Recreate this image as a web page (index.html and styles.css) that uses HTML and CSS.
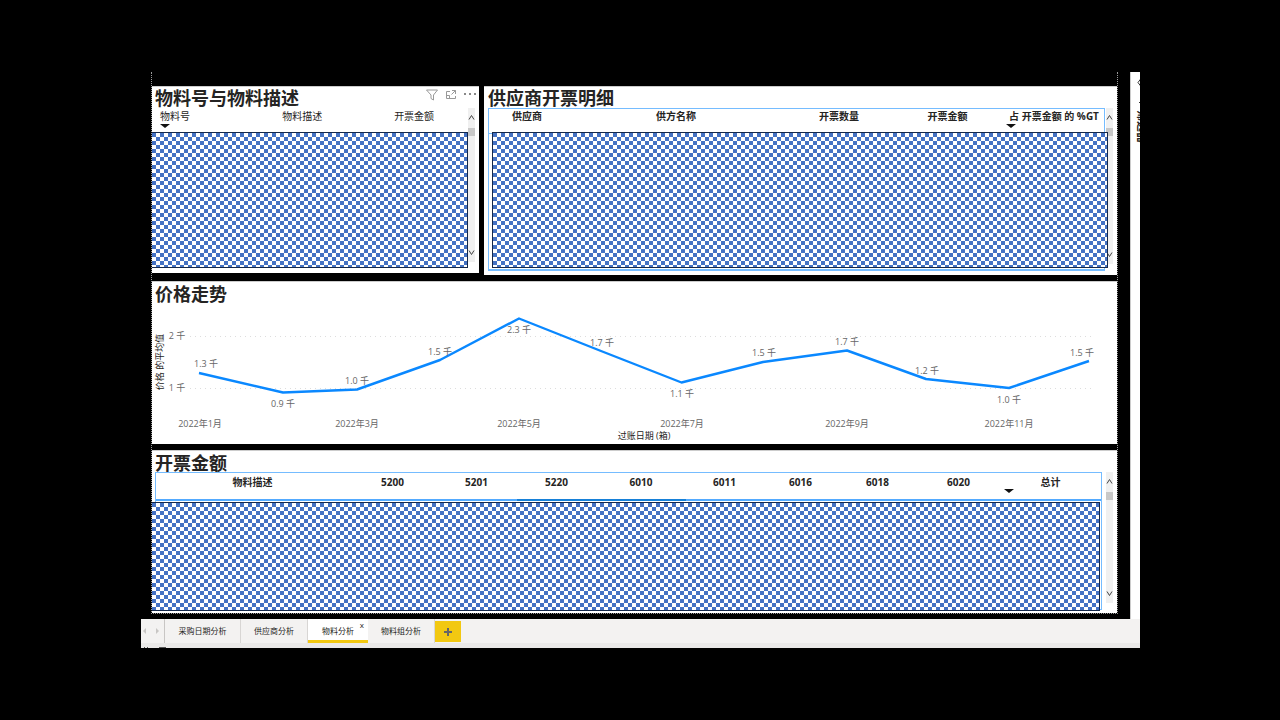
FILE: index.html
```html
<!DOCTYPE html>
<html lang="zh-CN">
<head>
<meta charset="utf-8">
<title>物料分析</title>
<link rel="stylesheet" href="styles.css">
</head>
<body>
<div class="app">
  <div class="workspace">
    <main class="canvas">
      <div class="row">
        <section class="panel panel-materials">
          <header class="panel-head">
            <h2>物料号与物料描述</h2>
            <div class="tools">
              <button type="button" aria-label="筛选器"><svg width="12" height="12" viewBox="0 0 12 12"><path d="M.5 1h11L7.500 6v5L5 9.500V6z"/></svg></button>
              <button type="button" aria-label="焦点模式"><svg width="12" height="12" viewBox="0 0 12 12"><path d="M5 2.500H1.500v7h9V7M1.500 6.500h3v3M7 1.500h3.500V5M10.500 1.500L6.500 5.500"/></svg></button>
              <button type="button" aria-label="更多选项"><svg class="dots" width="12" height="12" viewBox="0 0 12 12"><path d="M0 4h2v2H0zM5 4h2v2H5zM10 4h2v2h-2z"/></svg></button>
            </div>
          </header>
          <div class="table-area">
            <table class="plain">
              <colgroup><col class="a1"><col class="a2"><col class="a3"></colgroup>
              <thead><tr><th class="left">物料号<span class="sort"></span></th><th>物料描述</th><th>开票金额</th></tr></thead>
            </table>
            <div class="scroll"><svg viewBox="0 0 7 7"><path d="M1 5.500l2.500-4 2.500 4"/></svg><i></i><svg viewBox="0 0 7 7"><path d="M1 1.500l2.500 4 2.500-4"/></svg></div>
          </div>
          <svg class="mask mask-materials">
            <defs><pattern id="check" width="8" height="8" patternUnits="userSpaceOnUse"><path d="M0 0h4v4H0zM4 4h4v4H4z" fill="#4472c4" shape-rendering="crispEdges"/></pattern></defs>
            <rect width="100%" height="100%" fill="url(#check)"/>
          </svg>
        </section>
        <section class="panel panel-suppliers">
          <header class="panel-head"><h2>供应商开票明细</h2></header>
          <div class="table-area">
            <div class="outlined">
              <table>
                <colgroup><col class="b1"><col class="b2"><col class="b3"><col class="b4"><col class="b5"></colgroup>
                <thead><tr><th>供应商</th><th>供方名称</th><th>开票数量</th><th>开票金额</th><th>占 开票金额 的 %GT<span class="sort"></span></th></tr></thead>
              </table>
            </div>
            <div class="scroll"><svg viewBox="0 0 7 7"><path d="M1 5.500l2.500-4 2.500 4"/></svg><i></i><svg viewBox="0 0 7 7"><path d="M1 1.500l2.500 4 2.500-4"/></svg></div>
          </div>
          <svg class="mask mask-suppliers"><rect width="100%" height="100%" fill="url(#check)"/></svg>
        </section>
      </div>

      <section class="panel panel-chart">
        <header class="panel-head"><h2>价格走势</h2></header>
        <svg class="chart" viewBox="0 0 965 137" role="img" aria-label="价格走势">
          <g class="grid"><path d="M38 30.500H942"/><path d="M38 82.500H942"/></g>
          <polyline class="line" points="47,67 131,86.500 205,83.500 288,54 367,12.500 449,45 529.500,76.500 611,56 695,44.500 774,73 857,82 937,55"/>
          <g class="label">
            <text x="25" y="33">2 千</text><text x="25" y="85">1 千</text>
            <text x="54" y="61">1.3 千</text><text x="131" y="101">0.9 千</text><text x="205" y="78">1.0 千</text><text x="288" y="49">1.5 千</text>
            <text x="367" y="27">2.3 千</text><text x="450" y="40">1.7 千</text><text x="530" y="91">1.1 千</text><text x="612" y="50">1.5 千</text>
            <text x="695" y="39">1.7 千</text><text x="775" y="68">1.2 千</text><text x="857" y="97">1.0 千</text><text x="930" y="50">1.5 千</text>
            <text x="48" y="121">2022年1月</text><text x="205" y="121">2022年3月</text><text x="367" y="121">2022年5月</text>
            <text x="530" y="121">2022年7月</text><text x="695" y="121">2022年9月</text><text x="857" y="121">2022年11月</text>
          </g>
          <g class="axis-title"><text x="492" y="133">过账日期 (箱)</text><text transform="translate(11 56) rotate(-90)">价格 的平均值</text></g>
        </svg>
      </section>

      <section class="panel panel-matrix">
        <header class="panel-head"><h2>开票金额</h2></header>
        <div class="table-area">
          <div class="outlined">
            <table>
              <colgroup><col class="c1"><col class="c2"><col class="c3"><col class="c4"><col class="c5"><col class="c6"><col class="c7"><col class="c8"><col class="c9"><col class="c10"></colgroup>
              <thead><tr><th>物料描述</th><th>5200</th><th>5201</th><th class="picked">5220</th><th class="picked">6010</th><th>6011</th><th>6016</th><th>6018</th><th>6020</th><th>总计<span class="sort"></span></th></tr></thead>
            </table>
          </div>
          <div class="scroll"><svg viewBox="0 0 7 7"><path d="M1 5.500l2.500-4 2.500 4"/></svg><i></i><svg viewBox="0 0 7 7"><path d="M1 1.500l2.500 4 2.500-4"/></svg></div>
        </div>
        <svg class="mask mask-matrix"><rect width="100%" height="100%" fill="url(#check)"/></svg>
      </section>
    </main>
    <aside class="side">
      <svg width="9" height="38" viewBox="0 0 9 38"><path d="M10 6.500L7 10.500l3 4M8 30.500h2"/></svg>
      <span>筛选器</span>
    </aside>
  </div>
  <nav class="tabs">
    <div class="nav-arrows"><button type="button" aria-label="上一页"><svg width="5" height="6" viewBox="0 0 5 6"><path d="M4 0v6L1 3z"/></svg></button><button type="button" aria-label="下一页"><svg width="5" height="6" viewBox="0 0 5 6"><path d="M1 0v6l3-3z"/></svg></button></div>
    <button type="button" class="tab tab-dates">采购日期分析</button>
    <button type="button" class="tab tab-mid">供应商分析</button>
    <button type="button" class="tab active">物料分析<span class="close">x</span></button>
    <button type="button" class="tab tab-mid">物料组分析</button>
    <button type="button" class="add" aria-label="新建页"><svg width="8" height="8" viewBox="0 0 8 8"><path d="M4 0v8M0 4h8"/></svg></button>
  </nav>
  <footer class="status"><svg width="40" height="5" viewBox="0 0 40 5"><path d="M3 4.500h1M6 4.500h1M18 4.500h7"/></svg></footer>
</div>
</body>
</html>
```
FILE: styles.css
```css
* { box-sizing: border-box; }
body {
  margin: 0;
  min-height: 100vh;
  padding: 72px 140px 72px 141px;
  background: #000;
  color: #252423;
  font-family: "Open Sans", "Noto Sans CJK SC", sans-serif;
  font-size: 10px;
}
button {
  margin: 0;
  padding: 0;
  border: 0;
  background: none;
  color: inherit;
  font: inherit;
}
svg { display: block; fill: none; }
.app { display: flex; flex-direction: column; }
.workspace { display: flex; gap: 12px; }
.canvas {
  flex: 1;
  min-width: 0;
  display: flex;
  flex-direction: column;
  gap: 6px;
  margin: 0 0 5px 10px;
  padding-top: 14px;
  border: 1px dotted #999;
  border-top: 0;
}
.row {
  display: grid;
  grid-template-columns: 327fr 633fr;
  gap: 5px;
  align-items: start;
}
.panel {
  position: relative;
  display: flex;
  flex-direction: column;
  background: #fff;
  box-shadow: inset 0 1px #ccc;
}
.panel-materials { min-height: 187px; }
.panel-suppliers { min-height: 189px; }
.panel-chart { min-height: 163px; }
.panel-matrix { min-height: 163px; }
.panel-head {
  display: flex;
  justify-content: space-between;
  height: 22px;
  padding: 0 3px;
}
.panel-suppliers .panel-head { padding-left: 4px; }
.panel-chart .panel-head { height: 25px; }
h2 {
  margin: 0;
  font-size: 18px;
  line-height: 24px;
  font-weight: 700;
  font-family: "Noto Sans CJK SC", sans-serif;
  white-space: nowrap;
}
.row h2 { line-height: 22px; }
.tools { display: flex; gap: 7px; padding-top: 3px; height: 15px; }
.tools svg { stroke: #999; }
.tools .dots { fill: #888; stroke: none; }

.table-area { flex: 1; display: flex; padding: 0 4px; }
table {
  width: 100%;
  table-layout: fixed;
  border-collapse: collapse;
}
th {
  position: relative;
  height: 24px;
  padding: 0;
  vertical-align: top;
  font-size: 10px;
  line-height: 16px;
  white-space: nowrap;
}
.plain th { font-weight: 400; }
th.left { padding-left: 4px; text-align: left; }
.sort {
  position: absolute;
  top: 16px;
  left: 4px;
  border: 5px solid transparent;
  border-top: 4px solid #111;
  border-bottom: 0;
}
.outlined { flex: 1; min-width: 0; border: 1px solid #75bcff; }
.outlined thead tr { border-bottom: 1px solid #75bcff; }
.scroll {
  flex: none;
  display: flex;
  flex-direction: column;
  width: 7px;
  padding: 6px 0;
  background: #f0f0f0;
}
.scroll svg { width: 7px; height: 7px; stroke: #444; }
.scroll i { height: 8px; margin: 7px 0 auto; background: #c8c8c8; }

.panel-materials .table-area { padding-bottom: 11px; }
.panel-materials table { align-self: flex-start; flex: 1; margin-right: 1px; }
.a1 { width: 28%; } .a2 { width: 38%; } .a3 { width: 34%; }
.panel-suppliers th { line-height: 14px; }
.panel-suppliers .sort { top: 15px; left: 2px; }
.panel-suppliers .outlined { margin-bottom: 4px; border-bottom-width: 2px; }
.panel-suppliers .scroll { margin: 0 0 11px 1px; }
.b1 { width: 76px; } .b2 { width: 222px; } .b3 { width: 104px; } .b4 { width: 113px; } .b5 { width: 100px; }
.panel-matrix .table-area { padding-left: 3px; }
.panel-matrix .outlined { margin-bottom: 3px; }
.panel-matrix th { height: 27px; line-height: 18px; }
.panel-matrix thead tr { border-bottom: 2px solid #52aaff; }
.panel-matrix .picked { border-bottom: 2px solid #1680d8; }
.panel-matrix .scroll { margin: 0 0 10px 4px; }
.c1 { width: 193px; } .c2 { width: 87px; } .c3 { width: 81px; } .c4 { width: 79px; } .c5 { width: 90px; }
.c6 { width: 77px; } .c7 { width: 75px; } .c8 { width: 79px; } .c9 { width: 83px; } .c10 { width: 101px; }

/* Checkered cover over confidential rows */
.mask {
  position: absolute;
  border: 1px solid #14284b;
  background: #fff;
}
.mask-materials { top: 46px; left: 0; width: calc(100% - 11px); height: 136px; border-left: 0; }
.mask-suppliers { top: 46px; left: 8px; width: calc(100% - 17px); height: 136px; }
.mask-matrix { top: 52px; left: 0; width: calc(100% - 17px); height: 109px; border-left: 0; }

.chart { width: 100%; height: auto; font-size: 9px; }
.grid { stroke: #ddd; stroke-dasharray: 1 4; }
.line { stroke: #0a88ff; stroke-width: 2.4; stroke-linejoin: round; }
.label { fill: #666; text-anchor: middle; }
.axis-title { fill: #252423; text-anchor: middle; }

.side {
  width: 10px;
  overflow: hidden;
  background: #fff;
  border-left: 1px solid #ccc;
}
.side svg { stroke: #333; }
.side span {
  display: block;
  margin-left: 4px;
  writing-mode: vertical-rl;
  text-orientation: sideways;
  font-size: 11px;
  line-height: 14px;
  font-weight: 700;
}
.tabs {
  display: flex;
  height: 24px;
  background: #f3f2f1;
  font-size: 8px;
}
.nav-arrows {
  display: flex;
  justify-content: space-between;
  width: 24px;
  padding: 0 4px 0 1px;
  border-right: 1px solid #c8c6c4;
}
.nav-arrows svg { fill: #c8c6c4; }
.tab {
  position: relative;
  padding: 0 0 2px;
  border-right: 1px solid #d8d6d4;
}
.tab-mid { width: 67px; }
.tab-dates { width: 76px; }
.active {
  width: 60px;
  background: #fff;
  border-right: 0;
  box-shadow: inset 0 -3px #f2c811;
}
.close { position: absolute; top: 1px; right: 4px; line-height: 10px; }
.add {
  display: grid;
  place-items: center;
  width: 26px;
  margin: 2px 0 1px;
  background: #f2c811;
}
.add svg { stroke: #666; stroke-width: 2; }
.status { height: 5px; background: #eae9e8; }
.status svg { stroke: #555; }
```
